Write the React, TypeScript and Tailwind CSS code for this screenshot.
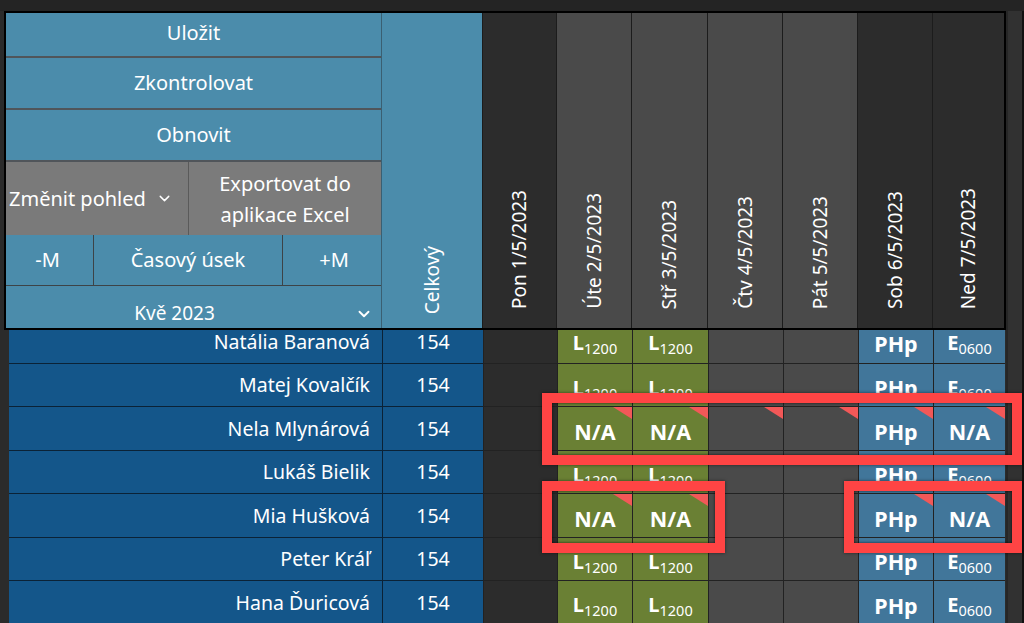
import React from 'react';
import { ChevronDown } from 'lucide-react';

type Kind = 'empty' | 'L' | 'NA' | 'PHp' | 'E';
type Cell = { kind: Kind; flag?: boolean };

const DAYS = [
  { label: 'Pon 1/5/2023', w: 'w-[74px]', head: 'bg-[#2c2c2c]', body: 'bg-[#2c2c2c]' },
  { label: 'Úte 2/5/2023', w: 'w-[75px]', head: 'bg-[#4a4a4a]', body: 'bg-[#6a8034]' },
  { label: 'Stř 3/5/2023', w: 'w-[76px]', head: 'bg-[#4a4a4a]', body: 'bg-[#6a8034]' },
  { label: 'Čtv 4/5/2023', w: 'w-[75px]', head: 'bg-[#4a4a4a]', body: 'bg-[#4a4a4a]' },
  { label: 'Pát 5/5/2023', w: 'w-[75px]', head: 'bg-[#4a4a4a]', body: 'bg-[#4a4a4a]' },
  { label: 'Sob 6/5/2023', w: 'w-[75px]', head: 'bg-[#2c2c2c]', body: 'bg-[#41769a]' },
  { label: 'Ned 7/5/2023', w: 'w-[72px]', head: 'bg-[#2c2c2c]', body: 'bg-[#41769a]' },
];

const normal: Cell[] = [
  { kind: 'empty' }, { kind: 'L' }, { kind: 'L' }, { kind: 'empty' }, { kind: 'empty' }, { kind: 'PHp' }, { kind: 'E' },
];

const ROWS: { name: string; cells: Cell[] }[] = [
  { name: 'Natália Baranová', cells: normal },
  { name: 'Matej Kovalčík', cells: normal },
  {
    name: 'Nela Mlynárová',
    cells: [
      { kind: 'empty' },
      { kind: 'NA', flag: true },
      { kind: 'NA', flag: true },
      { kind: 'empty', flag: true },
      { kind: 'empty', flag: true },
      { kind: 'PHp', flag: true },
      { kind: 'NA', flag: true },
    ],
  },
  { name: 'Lukáš Bielik', cells: normal },
  {
    name: 'Mia Hušková',
    cells: [
      { kind: 'empty' },
      { kind: 'NA', flag: true },
      { kind: 'NA', flag: true },
      { kind: 'empty' },
      { kind: 'empty' },
      { kind: 'PHp', flag: true },
      { kind: 'NA', flag: true },
    ],
  },
  { name: 'Peter Kráľ', cells: normal },
  { name: 'Hana Ďuricová', cells: normal },
];

function CellContent({ kind }: { kind: Kind }) {
  if (kind === 'L')
    return (
      <span className="font-bold text-[20px] leading-none">
        L<span className="font-normal text-[14.5px] relative top-[4px]">1200</span>
      </span>
    );
  if (kind === 'E')
    return (
      <span className="font-bold text-[20px] leading-none">
        E<span className="font-normal text-[14.5px] relative top-[4px]">0600</span>
      </span>
    );
  if (kind === 'NA') return <span className="font-bold text-[21.5px] leading-none">N/A</span>;
  if (kind === 'PHp') return <span className="font-bold text-[21.5px] leading-none">PHp</span>;
  return null;
}

const blueBtn = 'flex items-center justify-center bg-[#4b8cab] text-white text-[20px]';

export default function App() {
  return (
    <div className="w-[1024px] h-[623px] overflow-hidden relative bg-[#2b2b2b] text-white font-['Noto_Sans','Open_Sans',sans-serif]">
      <div className="h-[11px] bg-[#242424]" />
      <div className="flex">
        <div className="w-[1006px]">
          {/* header */}
          <div className="ml-[4px] h-[319px] border-2 border-black flex">
            <div className="w-[376px] flex flex-col border-r border-[#3a5f72]">
              <div className={`${blueBtn} h-[43px] pb-[4px]`}>Uložit</div>
              <div className="h-[2px] bg-[#50555a]" />
              <div className={`${blueBtn} h-[50px] pb-[1px]`}>Zkontrolovat</div>
              <div className="h-[2px] bg-[#50555a]" />
              <div className={`${blueBtn} h-[50px] pb-[1px]`}>Obnovit</div>
              <div className="h-[2px] bg-[#50555a]" />
              <div className="h-[73px] flex text-[20px]">
                <div className="w-[183px] bg-[#7a7a7a] border-r border-[#5a5a5a] flex items-center pl-[3px] gap-[10px]">
                  <span className="whitespace-nowrap">Změnit pohled</span>
                  <ChevronDown size={17} strokeWidth={2} />
                </div>
                <div className="flex-1 bg-[#7b7b7b] flex items-center justify-center text-center leading-[31px]">
                  Exportovat do
                  <br />
                  aplikace Excel
                </div>
              </div>
              <div className="h-[51px] flex bg-[#4b8cab] text-[20px] border-b border-[#3d4347]">
                <div className="w-[88px] flex items-center justify-center border-r border-[#3d4347] pr-[4px]">-M</div>
                <div className="w-[189px] flex items-center justify-center border-r border-[#3d4347]">Časový úsek</div>
                <div className="flex-1 flex items-center justify-center pl-[4px]">+M</div>
              </div>
              <div className="flex-1 bg-[#4b8cab] flex items-start pt-[13px] relative">
                <span className="flex-1 text-center pl-[4px] pr-[16px] text-[19px]">Kvě 2023</span>
                <ChevronDown size={18} strokeWidth={2.5} className="mr-[8px] mt-[6px]" />
              </div>
            </div>
            <div className="w-[100px] bg-[#4b8cab] flex flex-col justify-end items-center pb-[14px]">
              <span className="[writing-mode:vertical-rl] rotate-180 text-[19px]">Celkový</span>
            </div>
            {DAYS.map((d, i) => (
              <div
                key={d.label}
                className={`${i === DAYS.length - 1 ? 'flex-1' : d.w} ${d.head} border-l border-[#1c1c1c] flex flex-col justify-end items-center pb-[19px]`}
              >
                <span className="[writing-mode:vertical-rl] rotate-180 text-[19px] whitespace-nowrap">{d.label}</span>
              </div>
            ))}
          </div>

          {/* body */}
          <div>
            {ROWS.map((r, ri) => {
              const first = ri === 0;
              const rowH = first ? 'h-[33.5px]' : 'h-[43.5px]';
              const shift = first ? 'pb-[10px]' : '';
              return (
                <div key={r.name} className={`flex ${rowH}`}>
                  <div className="w-[9px] bg-[#2b2b2b]" />
                  <div className={`w-[373px] bg-[#14568a] border-b border-[#0b2236] flex items-center justify-end pr-[12px] text-[19.5px] ${shift}`}>
                    {r.name}
                  </div>
                  <div className={`w-[101px] bg-[#14568a] border-l border-b border-[#0b2236] flex items-center justify-center text-[19.5px] ${shift}`}>
                    154
                  </div>
                  {DAYS.map((d, i) => {
                    const c = r.cells[i];
                    return (
                      <div
                        key={d.label}
                        className={`${d.w} ${d.body} relative border-l border-b border-[#222222] flex items-center justify-center ${first ? 'pb-[6px]' : 'pt-[6px]'}`}
                      >
                        <CellContent kind={c.kind} />
                        {c.flag && (
                          <div className="absolute top-0 right-0 w-0 h-0 border-t-[12px] border-l-[19px] border-t-[#f25858] border-l-transparent" />
                        )}
                      </div>
                    );
                  })}
                </div>
              );
            })}
          </div>
        </div>
        {/* right scrollbar strip */}
        <div className="w-[18px] h-[612px] flex">
          <div className="w-[2px] bg-[#262626]" />
          <div className="w-[14px] bg-[#313131]" />
          <div className="w-[2px] bg-[#111111]" />
        </div>
      </div>

      {/* annotation boxes */}
      <div className="absolute left-[542px] top-[393px] w-[480px] h-[72px] border-[10px] border-[#ff4444] shadow-[0_0_3px_rgba(0,0,0,0.5),inset_0_0_3px_rgba(0,0,0,0.7)]" />
      <div className="absolute left-[542px] top-[481px] w-[183px] h-[72px] border-[10px] border-[#ff4444] shadow-[0_0_3px_rgba(0,0,0,0.5),inset_0_0_3px_rgba(0,0,0,0.7)]" />
      <div className="absolute left-[844px] top-[481px] w-[178px] h-[72px] border-[10px] border-[#ff4444] shadow-[0_0_3px_rgba(0,0,0,0.5),inset_0_0_3px_rgba(0,0,0,0.7)]" />
    </div>
  );
}
